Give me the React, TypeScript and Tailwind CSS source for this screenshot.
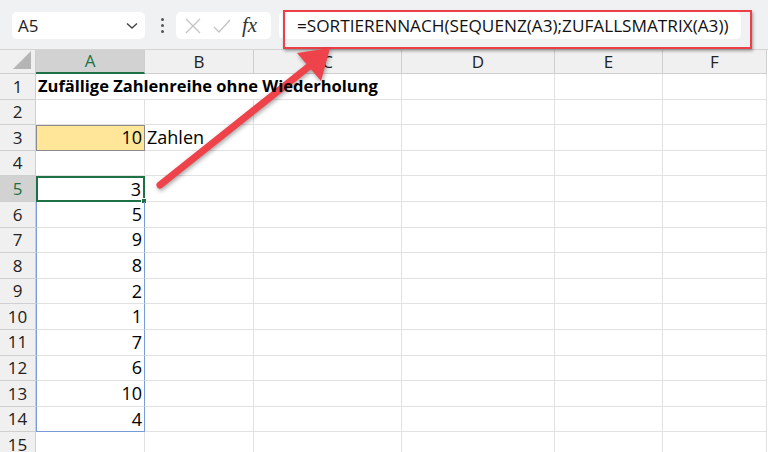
import React from 'react'

const cols = [
  { id: 'A', w: 109 },
  { id: 'B', w: 109 },
  { id: 'C', w: 148 },
  { id: 'D', w: 153 },
  { id: 'E', w: 108 },
  { id: 'F', w: 104 },
]

const values: Record<number, string> = {
  5: '3',
  6: '5',
  7: '9',
  8: '8',
  9: '2',
  10: '1',
  11: '7',
  12: '6',
  13: '10',
  14: '4',
}

const font = { fontFamily: '"Open Sans", "Liberation Sans", sans-serif' }

function Toolbar() {
  return (
    <div className="relative flex h-[50px] items-start border-b border-[#d4d4d4] bg-[#f0f1f3] pt-[12px]">
      <div className="ml-[12px] flex h-[27px] w-[133px] items-center justify-between rounded-[5px] bg-white pl-[6px] pr-[6px] text-[17px] text-[#222]">
        <span>A5</span>
        <svg width="12" height="8" viewBox="0 0 12 8" className="mr-[1px]">
          <path d="M1 1.5 L6 6 L11 1.5" fill="none" stroke="#444" strokeWidth="1.4" />
        </svg>
      </div>
      <div className="ml-[16px] mr-[12px] flex h-[27px] flex-col items-center justify-center gap-[3px]">
        <span className="h-[3px] w-[3px] rounded-full bg-[#555]" />
        <span className="h-[3px] w-[3px] rounded-full bg-[#555]" />
        <span className="h-[3px] w-[3px] rounded-full bg-[#555]" />
      </div>
      <div className="flex h-[27px] w-[95px] items-center rounded-[5px] bg-white pl-[9px]">
        <svg width="16" height="16" viewBox="0 0 16 16">
          <path d="M1 1 L15 15 M15 1 L1 15" stroke="#c4c4c4" strokeWidth="1.3" />
        </svg>
        <svg width="18" height="14" viewBox="0 0 18 14" className="ml-[12px]">
          <path d="M1 8 L6 13 L17 1" fill="none" stroke="#c4c4c4" strokeWidth="1.3" />
        </svg>
        <span
          className="ml-[11px] text-[21px] italic text-[#333]"
          style={{ fontFamily: '"Liberation Serif", serif' }}
        >
          fx
        </span>
      </div>
      <div className="ml-[8px] flex h-[27px] w-[462px] items-center rounded-[5px] bg-white pl-[18px] text-[17.2px] text-[#111]">
        =SORTIERENNACH(SEQUENZ(A3);ZUFALLSMATRIX(A3))
      </div>
      <div className="pointer-events-none absolute left-[283px] top-[10px] h-[39px] w-[469px] border-2 border-[#ec3f47] shadow-[1px_2px_3px_rgba(0,0,0,0.35)]" />
    </div>
  )
}

function Grid() {
  const rows = Array.from({ length: 15 }, (_, i) => i + 1)
  return (
    <div className="grid grid-cols-[36px_109px_109px_148px_153px_108px_104px] grid-rows-[24px_repeat(15,25.6px)]">
      <div className="relative border-b border-r border-[#cfcfcf] bg-[#f0f0f0]">
        <svg width="20" height="20" viewBox="0 0 20 20" className="absolute bottom-[3px] right-[3px]">
          <path d="M19 1 L19 19 L1 19 Z" fill="#b5b5b5" />
        </svg>
      </div>
      {cols.map((c) =>
        c.id === 'A' ? (
          <div
            key={c.id}
            className="flex items-center justify-center border-b-2 border-r border-b-[#1e7145] border-r-[#cfcfcf] bg-[#d2d2d2] text-[17px] text-[#1e7145]"
          >
            {c.id}
          </div>
        ) : (
          <div
            key={c.id}
            className="flex items-center justify-center border-b border-r border-[#cfcfcf] bg-[#f0f0f0] text-[17px] text-[#222]"
          >
            {c.id}
          </div>
        )
      )}
      {rows.map((r) => (
        <React.Fragment key={r}>
          <div
            className={`flex items-center justify-center border-b border-r border-[#cfcfcf] text-[17px] ${
              r === 5 ? 'bg-[#d2d2d2] text-[#1e7145]' : 'bg-[#f0f0f0] text-[#222]'
            }`}
          >
            {r}
          </div>
          {cols.map((c) => {
            if (c.id === 'A' && r === 1) {
              return (
                <div
                  key={c.id}
                  className="relative z-10 flex items-center whitespace-nowrap border-b border-[#e1e1e1] pl-[2px] text-[16.5px] font-bold text-black"
                >
                  Zufällige Zahlenreihe ohne Wiederholung
                </div>
              )
            }
            if (c.id === 'A' && r === 3) {
              return (
                <div
                  key={c.id}
                  className="flex items-center justify-end border border-[#8a8a8a] bg-[#ffe699] pr-[2px] text-[18px] text-black"
                >
                  10
                </div>
              )
            }
            if (c.id === 'B' && r === 3) {
              return (
                <div
                  key={c.id}
                  className="flex items-center border-b border-r border-[#e1e1e1] pl-[2px] text-[18px] text-black"
                >
                  Zahlen
                </div>
              )
            }
            if (c.id === 'A' && values[r]) {
              const sel = r === 5
              return (
                <div
                  key={c.id}
                  className={`relative flex items-center justify-end pr-[2px] text-[18px] text-black ${
                    sel
                      ? 'border-2 border-[#1e7145]'
                      : `border-r border-r-[#7b9bd8] ${r === 14 ? 'border-b border-b-[#7b9bd8]' : 'border-b border-b-[#e1e1e1]'} border-l border-l-[#7b9bd8]`
                  }`}
                >
                  {values[r]}
                  {sel && (
                    <span className="absolute -bottom-[4px] -right-[4px] h-[6px] w-[6px] border border-white bg-[#1e7145]" />
                  )}
                </div>
              )
            }
            return (
              <div
                key={c.id}
                className={`border-b border-[#e1e1e1] ${(c.id === 'A' || c.id === 'B') && r === 1 ? '' : 'border-r'}`}
              />
            )
          })}
        </React.Fragment>
      ))}
    </div>
  )
}

export default function App() {
  return (
    <div className="relative h-[452px] w-[768px] overflow-hidden bg-white" style={font}>
      <Toolbar />
      <Grid />
      <svg
        className="pointer-events-none absolute left-0 top-0"
        width="768"
        height="452"
        style={{ filter: 'drop-shadow(1px 2px 2px rgba(0,0,0,0.35))' }}
      >
        <line x1="160" y1="185" x2="312" y2="64" stroke="#ef434b" strokeWidth="7" strokeLinecap="round" />
        <polygon points="330,48 321,81 297,53" fill="#ef434b" />
      </svg>
    </div>
  )
}
